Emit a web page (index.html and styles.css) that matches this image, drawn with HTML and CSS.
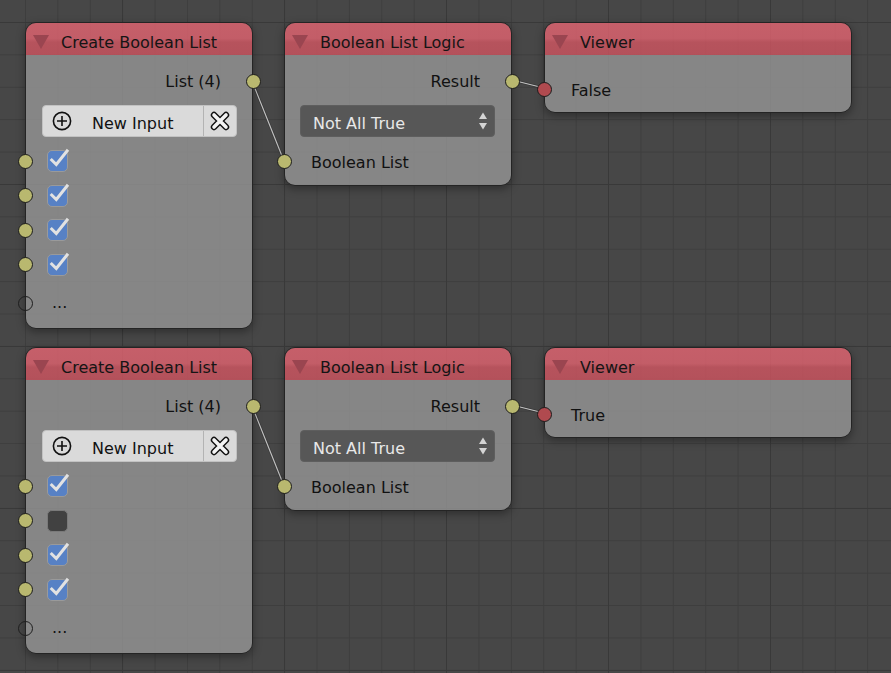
FILE: index.html
```html
<!DOCTYPE html>
<html>
<head>
<meta charset="utf-8">
<link rel="stylesheet" href="styles.css">
</head>
<body>
<div class="canvas">
  <svg class="links" width="891" height="673" viewBox="0 0 891 673">
    <g class="link-shadow">
      <path d="M252 81 L284 161"/>
      <path d="M512 80 L544 88"/>
      <path d="M252 406 L284 486"/>
      <path d="M512 405 L544 413"/>
    </g>
    <g class="link">
      <path d="M252 81 L284 161"/>
      <path d="M512 80 L544 88"/>
      <path d="M252 406 L284 486"/>
      <path d="M512 405 L544 413"/>
    </g>
  </svg>

  <!-- Row 1 -->
  <div class="node list-node n1">
    <div class="node-header">
      <svg class="collapse" width="16" height="14" viewBox="0 0 16 14"><polygon points="0,0 16,0 8,14"/></svg>
      <span class="title">Create Boolean List</span>
    </div>
    <div class="node-body">
      <div class="row out"><span>List (4)</span><span class="socket right"></span></div>
      <div class="btn">
        <div class="btn-main">
          <svg class="plus" width="20" height="20" viewBox="0 0 20 20"><circle cx="10" cy="10" r="8.6"/><path d="M10 5 V15 M5 10 H15"/></svg>
          <span class="btn-label">New Input</span>
        </div>
        <div class="btn-x">
          <svg width="24" height="24" viewBox="0 0 24 24"><path class="x-out" d="M6 6 L18 18 M18 6 L6 18"/><path class="x-in" d="M6 6 L18 18 M18 6 L6 18"/></svg>
        </div>
      </div>
      <div class="cb-row"><span class="socket left"></span><span class="cb on"><svg width="21" height="22" viewBox="0 0 21 22"><path d="M3.7 9 L9.3 14.5 L21 -0.3"/></svg></span></div>
      <div class="cb-row"><span class="socket left"></span><span class="cb on"><svg width="21" height="22" viewBox="0 0 21 22"><path d="M3.7 9 L9.3 14.5 L21 -0.3"/></svg></span></div>
      <div class="cb-row"><span class="socket left"></span><span class="cb on"><svg width="21" height="22" viewBox="0 0 21 22"><path d="M3.7 9 L9.3 14.5 L21 -0.3"/></svg></span></div>
      <div class="cb-row"><span class="socket left"></span><span class="cb on"><svg width="21" height="22" viewBox="0 0 21 22"><path d="M3.7 9 L9.3 14.5 L21 -0.3"/></svg></span></div>
      <div class="dots-row"><span class="socket left empty"></span><span>...</span></div>
    </div>
  </div>

  <div class="node logic-node n2">
    <div class="node-header">
      <svg class="collapse" width="16" height="14" viewBox="0 0 16 14"><polygon points="0,0 16,0 8,14"/></svg>
      <span class="title">Boolean List Logic</span>
    </div>
    <div class="node-body">
      <div class="row out"><span>Result</span><span class="socket right"></span></div>
      <div class="dropdown">
        <span class="dd-label">Not All True</span>
        <svg class="dd-arrows" width="10" height="20" viewBox="0 0 10 20"><polygon points="1,8 5,1.5 9,8"/><polygon points="1,12 5,18.5 9,12"/></svg>
      </div>
      <div class="row in"><span class="socket left"></span><span>Boolean List</span></div>
    </div>
  </div>

  <div class="node viewer-node n3">
    <div class="node-header">
      <svg class="collapse" width="16" height="14" viewBox="0 0 16 14"><polygon points="0,0 16,0 8,14"/></svg>
      <span class="title">Viewer</span>
    </div>
    <div class="node-body">
      <div class="row in"><span class="socket left red"></span><span>False</span></div>
    </div>
  </div>

  <!-- Row 2 -->
  <div class="node list-node n4">
    <div class="node-header">
      <svg class="collapse" width="16" height="14" viewBox="0 0 16 14"><polygon points="0,0 16,0 8,14"/></svg>
      <span class="title">Create Boolean List</span>
    </div>
    <div class="node-body">
      <div class="row out"><span>List (4)</span><span class="socket right"></span></div>
      <div class="btn">
        <div class="btn-main">
          <svg class="plus" width="20" height="20" viewBox="0 0 20 20"><circle cx="10" cy="10" r="8.6"/><path d="M10 5 V15 M5 10 H15"/></svg>
          <span class="btn-label">New Input</span>
        </div>
        <div class="btn-x">
          <svg width="24" height="24" viewBox="0 0 24 24"><path class="x-out" d="M6 6 L18 18 M18 6 L6 18"/><path class="x-in" d="M6 6 L18 18 M18 6 L6 18"/></svg>
        </div>
      </div>
      <div class="cb-row"><span class="socket left"></span><span class="cb on"><svg width="21" height="22" viewBox="0 0 21 22"><path d="M3.7 9 L9.3 14.5 L21 -0.3"/></svg></span></div>
      <div class="cb-row"><span class="socket left"></span><span class="cb off"></span></div>
      <div class="cb-row"><span class="socket left"></span><span class="cb on"><svg width="21" height="22" viewBox="0 0 21 22"><path d="M3.7 9 L9.3 14.5 L21 -0.3"/></svg></span></div>
      <div class="cb-row"><span class="socket left"></span><span class="cb on"><svg width="21" height="22" viewBox="0 0 21 22"><path d="M3.7 9 L9.3 14.5 L21 -0.3"/></svg></span></div>
      <div class="dots-row"><span class="socket left empty"></span><span>...</span></div>
    </div>
  </div>

  <div class="node logic-node n5">
    <div class="node-header">
      <svg class="collapse" width="16" height="14" viewBox="0 0 16 14"><polygon points="0,0 16,0 8,14"/></svg>
      <span class="title">Boolean List Logic</span>
    </div>
    <div class="node-body">
      <div class="row out"><span>Result</span><span class="socket right"></span></div>
      <div class="dropdown">
        <span class="dd-label">Not All True</span>
        <svg class="dd-arrows" width="10" height="20" viewBox="0 0 10 20"><polygon points="1,8 5,1.5 9,8"/><polygon points="1,12 5,18.5 9,12"/></svg>
      </div>
      <div class="row in"><span class="socket left"></span><span>Boolean List</span></div>
    </div>
  </div>

  <div class="node viewer-node n6">
    <div class="node-header">
      <svg class="collapse" width="16" height="14" viewBox="0 0 16 14"><polygon points="0,0 16,0 8,14"/></svg>
      <span class="title">Viewer</span>
    </div>
    <div class="node-body">
      <div class="row in"><span class="socket left red"></span><span>True</span></div>
    </div>
  </div>
</div>
</body>
</html>
```

FILE: styles.css
```css
* { box-sizing: border-box; }
html, body { margin: 0; padding: 0; }
body {
  width: 891px;
  height: 673px;
  overflow: hidden;
  font-family: "DejaVu Sans", "Liberation Sans", sans-serif;
  font-size: 16px;
  color: #111111;
}

.canvas {
  position: relative;
  width: 891px;
  height: 673px;
  overflow: hidden;
  background-color: #474747;
  background-image:
    linear-gradient(to right, #393939 1px, transparent 1px),
    linear-gradient(to bottom, #393939 1px, transparent 1px),
    linear-gradient(to right, #3e3e3e 1px, transparent 1px),
    linear-gradient(to bottom, #3e3e3e 1px, transparent 1px);
  background-size: 162px 100%, 100% 162px, 32.4px 100%, 100% 32.4px;
  background-position: 122px 0, 0 22px, 25px 0, 0 22px;
}

.links {
  position: absolute;
  left: 0;
  top: 0;
}
.links path { fill: none; }
.link-shadow path { stroke: rgba(30, 30, 30, 0.35); stroke-width: 2.6; }
.link path { stroke: #c4c4c4; stroke-width: 1.2; }

/* nodes on the free canvas */
.node {
  position: absolute;
  border: 1px solid #242424;
  border-radius: 11px;
  box-shadow: 0 3px 8px rgba(0, 0, 0, 0.35);
}
.n1 { left: 25px; top: 22px; }
.n2 { left: 284px; top: 22px; }
.n3 { left: 544px; top: 22px; }
.n4 { left: 25px; top: 347px; }
.n5 { left: 284px; top: 347px; }
.n6 { left: 544px; top: 347px; }

.list-node, .logic-node { width: 228px; }
.viewer-node { width: 308px; }

.node-header {
  height: 32px;
  padding: 7px 0 0 7px;
  display: flex;
  align-items: flex-start;
  border-radius: 10px 10px 0 0;
  background: linear-gradient(to bottom,
    rgba(229, 101, 114, 0.8) 0,
    rgba(226, 99, 112, 0.8) 48%,
    rgba(210, 86, 98, 0.8) 60%,
    rgba(207, 84, 96, 0.8) 100%);
}
.collapse {
  display: block;
  flex: none;
  margin-top: 5px;
}
.collapse polygon { fill: #9a4550; }
.title {
  margin-left: 12px;
  line-height: 25px;
  color: #151515;
  white-space: nowrap;
}

.node-body {
  border-radius: 0 0 10px 10px;
  background: rgba(150, 150, 150, 0.8);
  padding-top: 14px;
  padding-bottom: 12px;
}
.viewer-node .node-body { padding-top: 22px; padding-bottom: 11px; }

.row {
  position: relative;
  height: 24px;
  white-space: nowrap;
}
.row.out {
  padding-top: 1px;
  line-height: 24px;
  text-align: right;
  padding-right: 31px;
}
.row.in {
  padding-top: 4px;
  line-height: 20px;
  padding-left: 26px;
}
.logic-node .row.in { margin-top: 12px; }

.socket {
  position: absolute;
  top: 50%;
  width: 15px;
  height: 15px;
  margin-top: -7.5px;
  border-radius: 50%;
  border: 1px solid #1c1c1c;
  background: #b9b86f;
}
.socket.left { left: -8.5px; }
.socket.right { right: -8.5px; }
.socket.red { background: #b04a4f; }
.socket.empty { background: transparent; border-color: #1e1e1e; }

/* New Input button */
.btn {
  margin: 12px 15px 0 16px;
  height: 32px;
  display: flex;
  background: #dadada;
  border: 1px solid #c2c2c2;
  border-radius: 4px;
}
.btn-main {
  flex: 1;
  display: flex;
  align-items: center;
  padding-left: 9px;
  padding-top: 4px;
}
.plus {
  display: block;
  flex: none;
  margin-top: -4px;
}
.plus circle { fill: none; stroke: #111; stroke-width: 1.6; }
.plus path { stroke: #111; stroke-width: 1.6; }
.btn-label { margin-left: 20px; color: #111; }
.btn-x {
  width: 33px;
  border-left: 1px solid #b3b3b3;
  display: flex;
  align-items: center;
  justify-content: center;
}
.btn-x svg { display: block; }
.x-out { stroke: #111; stroke-width: 6.4; stroke-linecap: round; fill: none; }
.x-in { stroke: #f4f4f4; stroke-width: 3.6; stroke-linecap: round; fill: none; }

/* checkbox rows */
.cb-row {
  position: relative;
  height: 34.5px;
  display: flex;
  align-items: center;
  padding-left: 21px;
}
.btn + .cb-row { margin-top: 7px; }
.cb {
  display: block;
  width: 21px;
  height: 22px;
  border-radius: 5px;
  border: 1px solid #9a9a9a;
}
.cb.on { background: #5781c5; }
.cb.off { background: #414141; border-color: #7a7a7a; }
.cb svg { display: block; overflow: visible; margin: -1px 0 0 -1px; }
.cb path { fill: none; stroke: #e2e2e2; stroke-width: 3; }

.dots-row {
  position: relative;
  margin-top: 8px;
  height: 26px;
  line-height: 26px;
  padding-left: 26px;
}

/* dropdown */
.dropdown {
  margin: 12px 16px 0 15px;
  height: 32px;
  display: flex;
  align-items: center;
  justify-content: space-between;
  padding: 4px 6px 0 12px;
  background: #575757;
  border: 1px solid #5e5e5e;
  border-radius: 4px;
  color: #e8e8e8;
}
.dd-arrows { display: block; margin-top: -4px; }
.dd-arrows polygon { fill: #d4d4d4; }
```
